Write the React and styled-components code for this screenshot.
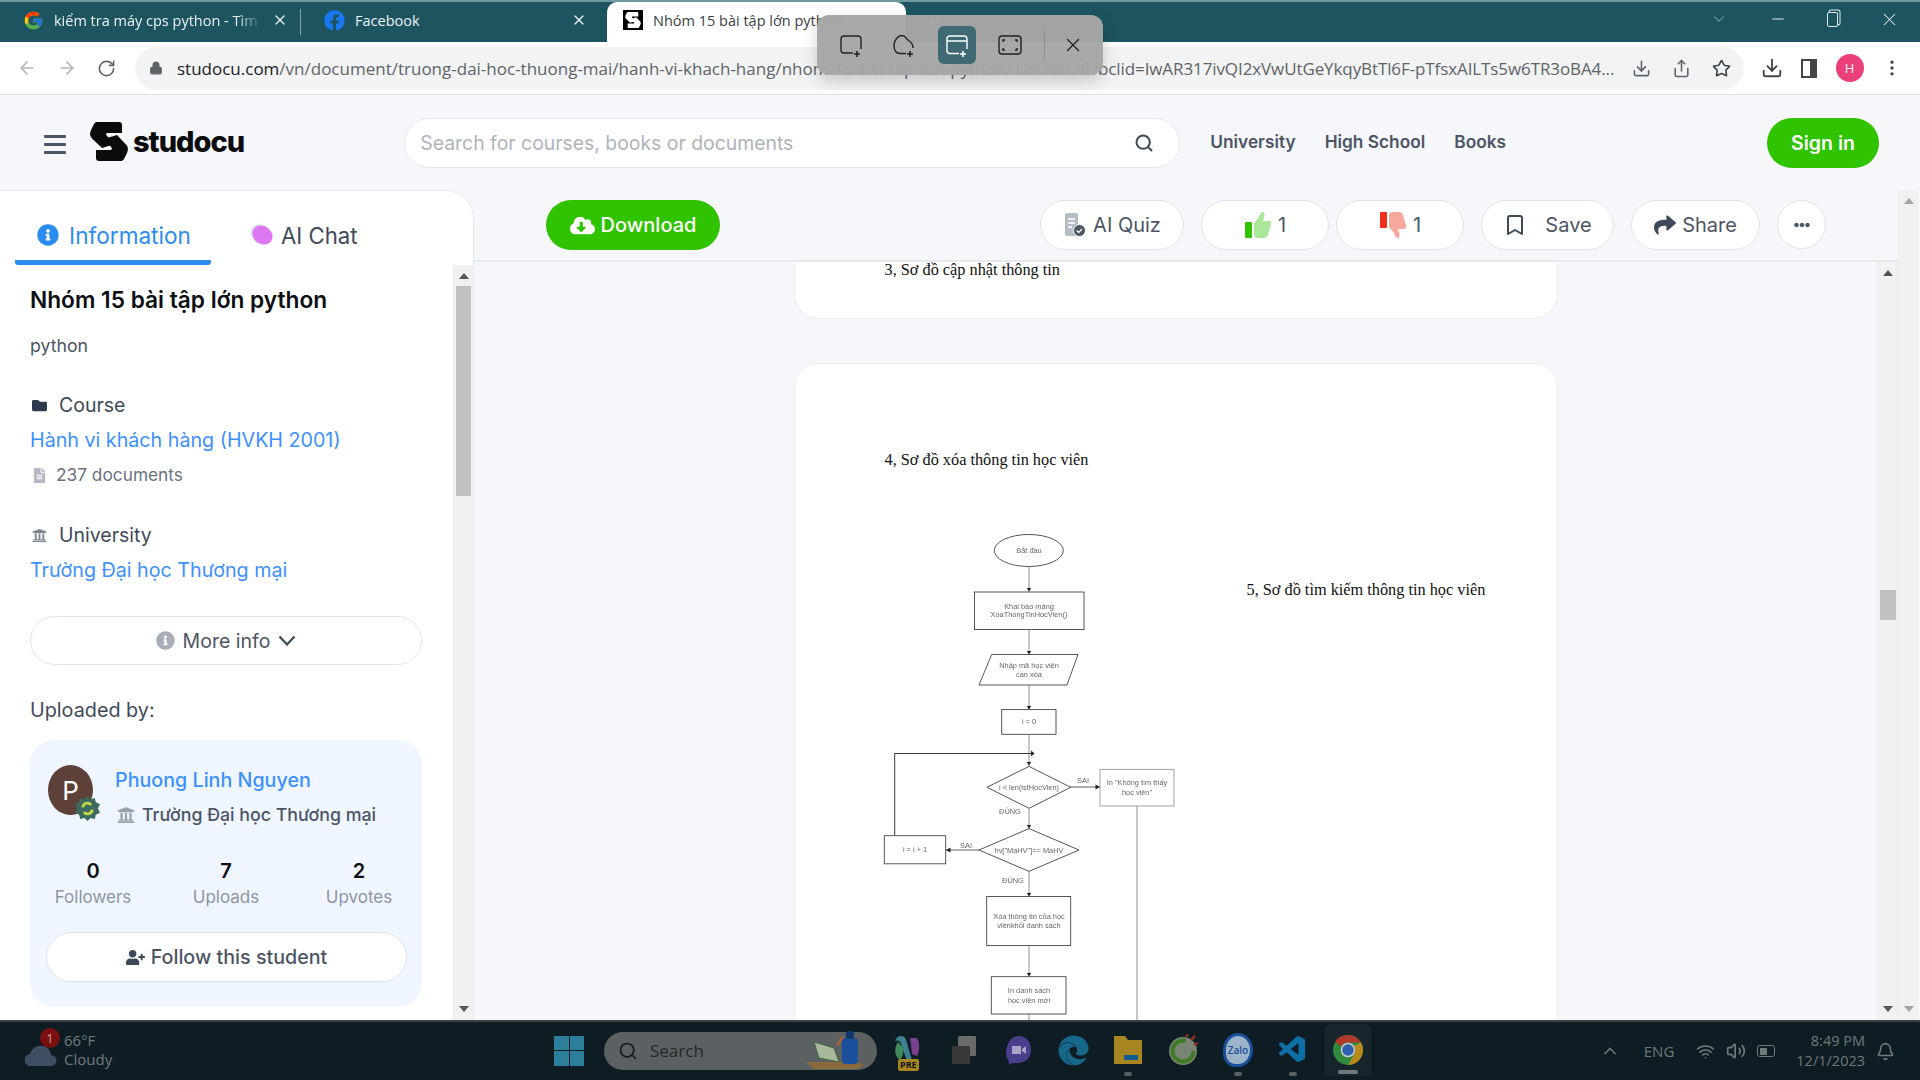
import React from "react";
import styled, { createGlobalStyle } from "styled-components";
import {
  ArrowLeft, ArrowRight, RotateCw, Lock, Star, Download, Share, X, Minus, ChevronDown, ChevronUp,
  Search, Bookmark, Wifi, Volume2, Bell, Plus, EllipsisVertical,
} from "lucide-react";
import {
  FaFolder, FaFileAlt, FaUniversity, FaInfoCircle, FaUserPlus, FaShare, FaEllipsisH, FaCloudDownloadAlt, FaFacebook, FaEdge,
} from "react-icons/fa";
import { FcGoogle } from "react-icons/fc";
import { VscVscode } from "react-icons/vsc";

const UI = '"Inter", "Liberation Sans", sans-serif';
const CHROME = '"Open Sans", "Liberation Sans", sans-serif';

const GlobalStyle = createGlobalStyle`
  html, body { margin: 0; padding: 0; background: #f5f7fb; }
  * { box-sizing: border-box; }
`;

function StudocuLogo() {
  return (
    <svg width="38" height="39" viewBox="0 0 38 39" fill="#0b0b0b">
      <path d="M7 0H29a3 3 0 0 1 3 3V11H18c-2 0-2.500 1.500-1 3L25 22 12 26 2.500 17C-1 13.500 0 11 1 8L4 2C5 .5 6 0 7 0Z" />
      <path d="M31 39H9a3 3 0 0 1-3-3V28H20c2 0 2.500-1.500 1-3L14 17 27 13l8.500 9c3.500 3.500 2.500 6 1.500 9l-3 6c-1 1.500-2 2-3 2Z" />
    </svg>
  );
}

function StudocuFavicon() {
  return (
    <FaviconBox>
      <svg width="16" height="16" viewBox="0 0 38 39" fill="#fff">
        <path d="M7 0H29a3 3 0 0 1 3 3V11H18c-2 0-2.500 1.500-1 3L25 22 12 26 2.500 17C-1 13.500 0 11 1 8L4 2C5 .5 6 0 7 0Z" />
        <path d="M31 39H9a3 3 0 0 1-3-3V28H20c2 0 2.500-1.500 1-3L14 17 27 13l8.500 9c3.500 3.500 2.500 6 1.500 9l-3 6c-1 1.500-2 2-3 2Z" />
      </svg>
    </FaviconBox>
  );
}

function SnipIcon({ kind, color = "#222" }) {
  const plus = <path d="M19 19v6M16 22h6" stroke={color} strokeWidth="1.6" />;
  return (
    <svg width="26" height="26" viewBox="0 0 26 26" fill="none" stroke={color} strokeWidth="1.4">
      {kind === "rect" && (<><path d="M15 21H6a3 3 0 0 1-3-3V7a3 3 0 0 1 3-3h14a3 3 0 0 1 3 3v10" />{plus}</>)}
      {kind === "free" && (<><path d="M15 21.500H9C5 21.500 3 18 3 14 3 8 7 3.500 11 3.500c4 0 3.500 3 6.500 5C20 10 22 12 22 16" />{plus}</>)}
      {kind === "window" && (<><path d="M15 21.500H6a3 3 0 0 1-3-3V7a3 3 0 0 1 3-3h14a3 3 0 0 1 3 3v10M3 9h20" />{plus}</>)}
      {kind === "full" && (<><rect x="2" y="4" width="22" height="18" rx="3" /><path d="M8 8H6v2M18 8h2v2M8 18H6v-2M18 18h2v-2" /></>)}
    </svg>
  );
}

function ThumbIcon({ down }) {
  const bar = down ? "#f0301c" : "#2fc300";
  const hand = down ? "#f5a89c" : "#a9e89b";
  return (
    <ThumbSvg $down={down} width="28" height="28" viewBox="0 0 28 28">
      <rect x="1" y="11" width="7" height="16" rx="1" fill={bar} />
      <path d="M10 12 15 6c1-2 1-4 3-5 2 0 3 2 2.500 4L19 10h6c2 0 2.500 2 2 3.500L24 24c-.5 2-2 3-4 3h-6c-2 0-4-1-4-3Z" fill={hand} />
    </ThumbSvg>
  );
}

function QuizIcon() {
  return (
    <svg width="24" height="24" viewBox="0 0 24 24">
      <path d="M2 2a2 2 0 0 1 2-2h9a2 2 0 0 1 2 2v19a2 2 0 0 1-2 2H4a2 2 0 0 1-2-2Z" fill="#b6bcc6" />
      <path d="M5 6h7M5 10h7M5 14h4" stroke="#fff" strokeWidth="1.500" />
      <circle cx="16.500" cy="17.500" r="6" fill="#4c5564" stroke="#fff" />
      <path d="M13.700 17.500l2 2 3.300-3.500" stroke="#fff" strokeWidth="1.400" fill="none" />
    </svg>
  );
}

function VerifiedBadge() {
  return (
    <BadgeWrap>
      <svg width="25" height="25" viewBox="0 0 24 24">
        <path d="M12 0l3 3 4-1 1 4 4 2-2 4 2 4-4 2-1 4-4-1-3 3-3-3-4 1-1-4-4-2 2-4-2-4 4-2 1-4 4 1Z" fill="#3d6b60" />
        <path d="M7.500 11a4.500 4.500 0 0 1 8-2.500M16.500 13a4.500 4.500 0 0 1-8 2.500" stroke="#c8d94a" strokeWidth="2.600" fill="none" />
      </svg>
    </BadgeWrap>
  );
}

function MoreChevron() {
  return (
    <svg width="18" height="11" viewBox="0 0 18 11" fill="none" stroke="#3e4a5a" strokeWidth="2.200">
      <path d="M1.500 1.500 9 9.500l7.500-8" />
    </svg>
  );
}

function Flowchart() {
  const Box = (x, y, w, h) => <rect x={x} y={y} width={w} height={h} fill="#fff" stroke="#444" strokeWidth="0.9" />;
  const Line = (d) => <path d={d} fill="none" stroke="#777" strokeWidth="0.8" />;
  const Arrow = (x, y) => <path d={`M${x - 2.200} ${y - 3}h4.400l-2.200 3.400Z`} fill="#222" />;
  const T = (x, y, s) => <text x={x} y={y} textAnchor="middle" fontSize="7.400" fill="#666" fontFamily="Liberation Sans, sans-serif">{s}</text>;
  return (
    <ChartSvg width="300" height="500" viewBox="880 530 300 500">
      {Line("M1029 567V1020")}
      {Line("M1137 806V1030")}
      <path d="M894.700 835.700V753.500H1031" fill="none" stroke="#222" strokeWidth="0.9" />
      <path d="M1031 750.500v6l3.500-3Z" fill="#222" />
      <path d="M1070 787H1100" fill="none" stroke="#333" strokeWidth="0.8" />
      <path d="M1100 787l-4.500-2.500v5Z" fill="#222" />
      <path d="M979 850H946" fill="none" stroke="#333" strokeWidth="0.8" />
      <path d="M946 850l4.500-2.500v5Z" fill="#222" />
      {Arrow(1029, 591)}{Arrow(1029, 654)}{Arrow(1029, 709)}{Arrow(1029, 765)}{Arrow(1029, 828)}{Arrow(1029, 896)}{Arrow(1029, 976)}
      <ellipse cx="1028.800" cy="550.500" rx="34.500" ry="16" fill="#fff" stroke="#444" strokeWidth="0.9" />
      {Box(974.500, 592, 109.500, 37.500)}
      <polygon points="991.700,654.500 1078,654.500 1067,685 979,685" fill="#fff" stroke="#444" strokeWidth="0.9" />
      {Box(1001.700, 709.600, 54.300, 24.700)}
      <polygon points="987,787.300 1029,766.400 1070.700,787.300 1029,808.300" fill="#fff" stroke="#444" strokeWidth="0.9" />
      <rect x="1100" y="769.400" width="74" height="36.600" fill="#fff" stroke="#999" strokeWidth="0.9" />
      <polygon points="979,850 1029,828.600 1079,850 1029,871.400" fill="#fff" stroke="#444" strokeWidth="0.9" />
      {Box(884.300, 835.700, 61.400, 28.100)}
      {Box(986.700, 896.500, 84, 49.100)}
      {Box(991.300, 976.700, 74.700, 37.300)}
      {T(1029, 553, "Bắt đầu")}
      {T(1029, 608.500, "Khai báo mảng")}
      {T(1029, 617, "XoaThongTinHocVien()")}
      {T(1029, 667.500, "Nhập mã học viên")}
      {T(1029, 677, "cần xóa")}
      {T(1029, 724, "i = 0")}
      {T(1029, 789.500, "i < len(lstHocVien)")}
      {T(1083, 782.500, "SAI")}
      {T(1137, 785, "In \"Không tìm thấy")}
      {T(1137, 794.500, "học viên\"")}
      {T(1010, 814, "ĐÚNG")}
      {T(1029, 852.500, "hv[\"MaHV\"]== MaHV")}
      {T(966, 847.500, "SAI")}
      {T(915, 852, "i = i + 1")}
      {T(1013, 882.500, "ĐÚNG")}
      {T(1029, 919, "Xóa thông tin của học")}
      {T(1029, 928, "viênkhỏi danh sách")}
      {T(1029, 993, "In danh sách")}
      {T(1029, 1003, "học viên mới")}
    </ChartSvg>
  );
}

function Scrollbar({ width, thumbTop, thumbHeight, inset, muted }) {
  return (
    <Track $width={width}>
      <ArrowTop $muted={muted} />
      {thumbHeight ? <Thumb $top={thumbTop} $height={thumbHeight} $inset={inset} /> : null}
      <ArrowBottom $muted={muted} />
    </Track>
  );
}

function TaskbarIcons() {
  return (
    <>
      <TaskIcon>
        <svg width="32" height="32" viewBox="0 0 32 32">
          <path d="M9 2c4 0 5 3 6 7l4 14c1 4 5 4 7 4-3 3-9 3-11 0L9 10C8 6 6 6 3 7c1-3 3-5 6-5Z" fill="#3f7f90" />
          <path d="M6 8c-4 6-4 14 2 18 3-4 4-8 3-12Z" fill="#3f8a5a" />
          <path d="M18 4h7c3 5 3 12 0 18l-5-2Z" fill="#7a3f90" />
        </svg>
        <PreTag>PRE</PreTag>
      </TaskIcon>
      <TaskIcon>
        <svg width="32" height="32" viewBox="0 0 32 32">
          <rect x="11" y="2" width="18" height="20" fill="#6a6a6a" rx="1" />
          <rect x="5" y="12" width="18" height="18" fill="#383838" rx="1" />
        </svg>
      </TaskIcon>
      <TaskIcon>
        <svg width="32" height="32" viewBox="0 0 32 32">
          <path d="M16 2c8 0 13 6 13 14s-6 13-13 13c-3 0-6-.5-9 2 0-3 0-4-2-7C2 16 7 2 16 2Z" fill="#4a3f8c" />
          <path d="M10 12h9v8h-9ZM20 15l4-3v8l-4-3Z" fill="#a9a4c8" />
        </svg>
      </TaskIcon>
      <TaskIcon><FaEdge size={31} color="#17688a" /></TaskIcon>
      <TaskIcon $dot>
        <svg width="32" height="32" viewBox="0 0 32 32">
          <path d="M2 2h11l3 4h14v24H2Z" fill="#a98522" />
          <rect x="12" y="21" width="14" height="5" fill="#0f5c8c" />
        </svg>
      </TaskIcon>
      <TaskIcon>
        <svg width="32" height="32" viewBox="0 0 32 32">
          <circle cx="16" cy="17" r="14" fill="#7a8474" />
          <circle cx="16" cy="17" r="10.500" fill="none" stroke="#3f7a24" strokeWidth="4" strokeDasharray="52 14" />
          <path d="M19 3l2-3M24 6l4-4M27 11l4-2" stroke="#8a3220" strokeWidth="2.500" />
        </svg>
      </TaskIcon>
      <TaskIcon $dot>
        <ZaloMark>Zalo</ZaloMark>
      </TaskIcon>
      <TaskIcon $dot><VscVscode size={32} color="#0e6fa8" /></TaskIcon>
      <ChromeSlot>
        <svg width="32" height="32" viewBox="0 0 32 32">
          <circle cx="16" cy="16" r="15" fill="#2f8a3f" />
          <path d="M16 1a15 15 0 0 1 13 7.500H16a7.500 7.500 0 0 0-6.500 3.700L3 8A15 15 0 0 1 16 1Z" fill="#b0392c" />
          <path d="M29 8.500A15 15 0 0 1 16 31l6.500-11.200A7.500 7.500 0 0 0 22 12Z" fill="#b88a1c" />
          <circle cx="16" cy="16" r="6.500" fill="#2f5fb0" stroke="#c9ccd0" strokeWidth="1.500" />
        </svg>
        <ChromeBar />
      </ChromeSlot>
    </>
  );
}

export default function App() {
  return (
    <>
      <GlobalStyle />
      <Screen>
        <TabStrip>
          <Tab $width={300}>
            <FcGoogle size={21} />
            <TabTitle $fade>kiểm tra máy cps python - Tìm trên Google</TabTitle>
            <X size={16} color="#e6eeef" />
          </Tab>
          <TabDivider />
          <Tab $width={298}>
            <FaFacebook size={21} color="#1877f2" />
            <TabTitle>Facebook</TabTitle>
            <X size={16} color="#e6eeef" />
          </Tab>
          <ActiveTab>
            <StudocuFavicon />
            <TabTitle $active>Nhóm 15 bài tập lớn python</TabTitle>
          </ActiveTab>
          <NewTab><Plus size={18} color="#e6eeef" /></NewTab>
          <WindowControls>
            <ChevronDown size={18} color="#9fbcc0" strokeWidth={1.2} />
            <Minus size={18} color="#dfe9ea" strokeWidth={1.4} />
            <RestoreGlyph />
            <X size={21} color="#e6eeef" strokeWidth={1.2} />
          </WindowControls>
        </TabStrip>

        <AddressBar>
          <NavIcons>
            <ArrowLeft size={20} color="#b3b6ba" />
            <ArrowRight size={20} color="#b3b6ba" />
            <RotateCw size={19} color="#5f6368" />
          </NavIcons>
          <UrlPill>
            <Lock size={14} color="#5f6368" fill="#5f6368" />
            <UrlHead>
              <b>studocu.com</b>/vn/document/truong-dai-hoc-thuong-mai/hanh-vi-khach-hang/nhom-15-bai-tap-lon-python/122700767?f
            </UrlHead>
            <UrlTail>bclid=IwAR317ivQI2xVwUtGeYkqyBtTl6F-pTfsxAILTs5w6TR3oBA4...</UrlTail>
            <PillIcons>
              <Download size={19} color="#5f6368" />
              <Share size={19} color="#5f6368" />
              <Star size={19} color="#3c4043" />
            </PillIcons>
          </UrlPill>
          <BrowserIcons>
            <Download size={22} color="#444" />
            <SidePanelGlyph />
            <ProfileDot>H</ProfileDot>
            <EllipsisVertical size={20} color="#444" />
          </BrowserIcons>
        </AddressBar>

        <SiteHeader>
          <Burger><span /><span /><span /></Burger>
          <Logo>
            <StudocuLogo />
            <LogoWord>studocu</LogoWord>
          </Logo>
          <SearchBox>
            <SearchText>Search for courses, books or documents</SearchText>
            <Search size={20} color="#3e4a5a" strokeWidth={2.4} />
          </SearchBox>
          <NavLinks>
            <NavLink>University</NavLink>
            <NavLink>High School</NavLink>
            <NavLink>Books</NavLink>
          </NavLinks>
          <SignIn>Sign in</SignIn>
        </SiteHeader>

        <Body>
          <Sidebar>
            <SideTabs>
              <InfoTab>
                <FaInfoCircle size={22} color="#2a8cf0" />
                Information
              </InfoTab>
              <ChatTab>
                <ChatBlob />
                AI Chat
              </ChatTab>
            </SideTabs>
            <SideBody>
              <SideContent>
                <DocTitle>Nhóm 15 bài tập lớn python</DocTitle>
                <DocSub>python</DocSub>
                <MetaHead $gap={34}><FaFolder size={15} color="#2e3b4e" />Course</MetaHead>
                <MetaLink>Hành vi khách hàng (HVKH 2001)</MetaLink>
                <DocCount><FaFileAlt size={15} color="#b4bac3" />237 documents</DocCount>
                <MetaHead $gap={35}><FaUniversity size={15} color="#7d8592" />University</MetaHead>
                <MetaLink>Trường Đại học Thương mại</MetaLink>
                <MoreInfo>
                  <FaInfoCircle size={19} color="#a9afb8" />
                  More info
                  <MoreChevron />
                </MoreInfo>
                <UploadedBy>Uploaded by:</UploadedBy>
                <UploaderCard>
                  <UploaderRow>
                    <Avatar>P<VerifiedBadge /></Avatar>
                    <div>
                      <UploaderName>Phuong Linh Nguyen</UploaderName>
                      <UploaderSchool><FaUniversity size={18} color="#9aa1ac" />Trường Đại học Thương mại</UploaderSchool>
                    </div>
                  </UploaderRow>
                  <Stats>
                    <Stat><StatNum>0</StatNum><StatLabel>Followers</StatLabel></Stat>
                    <Stat><StatNum>7</StatNum><StatLabel>Uploads</StatLabel></Stat>
                    <Stat><StatNum>2</StatNum><StatLabel>Upvotes</StatLabel></Stat>
                  </Stats>
                  <FollowButton><FaUserPlus size={19} color="#3e4a5a" />Follow this student</FollowButton>
                </UploaderCard>
              </SideContent>
              <Scrollbar width={20} thumbTop={3} thumbHeight={210} inset={2} />
            </SideBody>
          </Sidebar>

          <Main>
            <MainColumn>
              <ActionBar>
                <DownloadButton><FaCloudDownloadAlt size={25} />Download</DownloadButton>
                <Actions>
                  <PillButton $width={144}><QuizIcon />AI Quiz</PillButton>
                  <PillButton $width={128}><ThumbIcon />1</PillButton>
                  <PillButton $width={128} $tight><ThumbIcon down />1</PillButton>
                  <PillButton $width={133} $wide><Bookmark size={24} color="#3e4a5a" />Save</PillButton>
                  <PillButton $width={129}><FaShare size={22} color="#3e4a5a" />Share</PillButton>
                  <RoundButton><FaEllipsisH size={16} color="#4c5564" /></RoundButton>
                </Actions>
              </ActionBar>
              <DocRow>
                <DocArea>
                  <PageTop>
                    <PageLine>3, Sơ đồ cập nhật thông tin</PageLine>
                  </PageTop>
                  <PageFull>
                    <LeftCol>
                      <PageLine>4, Sơ đồ xóa thông tin học viên</PageLine>
                      <Flowchart />
                    </LeftCol>
                    <RightCol>
                      <PageLine>5, Sơ đồ tìm kiếm thông tin học viên</PageLine>
                    </RightCol>
                  </PageFull>
                </DocArea>
                <Scrollbar width={21} thumbTop={310} thumbHeight={30} inset={2} />
              </DocRow>
            </MainColumn>
            <Scrollbar width={20} muted />
          </Main>
        </Body>

        <Taskbar>
          <Weather>
            <CloudWrap>
              <svg width="32" height="22" viewBox="0 0 32 22"><path d="M6 22a6 6 0 0 1-1-12C7 4 12 1 18 2c5 1 8 5 8 9a5.500 5.500 0 0 1 0 11Z" fill="#3f4f63" /></svg>
              <AlertBadge>1</AlertBadge>
            </CloudWrap>
            <WeatherText><span>66°F</span><span>Cloudy</span></WeatherText>
          </Weather>
          <StartGlyph>
            <i /><i /><i /><i />
          </StartGlyph>
          <TaskSearch>
            <Search size={20} color="#151a1c" strokeWidth={2} />
            <span>Search</span>
            <SearchArt>
              <svg width="62" height="40" viewBox="0 0 62 40">
                <path d="M0 32h50l8 3-6 4H8Z" fill="#8a6a3c" />
                <path d="M8 12l20 6 5 14-20-4Z" fill="#a9b79a" stroke="#3d6b40" />
                <path d="M30 14l6-8 2 2-6 8Z" fill="#a8623c" />
                <rect x="36" y="8" width="16" height="26" rx="4" fill="#1a4f9c" />
                <rect x="40" y="1" width="8" height="8" rx="2" fill="#12386e" />
              </svg>
            </SearchArt>
          </TaskSearch>
          <TaskIcons><TaskbarIcons /></TaskIcons>
          <Tray>
            <ChevronUp size={20} color="#70797c" />
            <TrayLang>ENG</TrayLang>
            <Wifi size={19} color="#70797c" />
            <Volume2 size={20} color="#70797c" />
            <BatteryGlyph><i /></BatteryGlyph>
            <Clock><span>8:49 PM</span><span>12/1/2023</span></Clock>
            <Bell size={19} color="#70797c" />
          </Tray>
        </Taskbar>

        <SnipToolbar>
          <SnipButton><SnipIcon kind="rect" /></SnipButton>
          <SnipButton><SnipIcon kind="free" /></SnipButton>
          <SnipButton $active><SnipIcon kind="window" color="#fff" /></SnipButton>
          <SnipButton><SnipIcon kind="full" /></SnipButton>
          <SnipDivider />
          <SnipClose><X size={22} color="#222" strokeWidth={1.4} /></SnipClose>
        </SnipToolbar>
      </Screen>
    </>
  );
}

const Screen = styled.div`
  position: relative;
  width: 1920px;
  height: 1080px;
  display: flex;
  flex-direction: column;
  overflow: hidden;
  background: #f5f7fb;
`;

/* browser chrome */
const TabStrip = styled.div`
  height: 42px;
  flex: none;
  display: flex;
  align-items: flex-end;
  background: #1c5560;
  border-top: 2px solid #6f9aa0;
  font-family: ${CHROME};
`;

const Tab = styled.div`
  width: ${(p) => p.$width}px;
  height: 40px;
  flex: none;
  display: flex;
  align-items: center;
  gap: 10px;
  padding: 0 12px 4px 23px;
`;

const TabDivider = styled.div`
  width: 1px;
  height: 26px;
  margin-bottom: 7px;
  flex: none;
  background: #7fa3a8;
`;

const TabTitle = styled.div`
  flex: 1;
  min-width: 0;
  font-size: 14.500px;
  white-space: nowrap;
  overflow: hidden;
  color: ${(p) => (p.$active ? "#3c4043" : "#eaf1f2")};
  ${(p) => p.$fade && "mask-image: linear-gradient(90deg, #000 88%, transparent 100%);"}
`;

const ActiveTab = styled(Tab)`
  width: 299px;
  margin-left: 8px;
  padding-left: 16px;
  background: #fff;
  border-radius: 10px 10px 0 0;
`;

const FaviconBox = styled.div`
  width: 20px;
  height: 20px;
  flex: none;
  display: flex;
  align-items: center;
  justify-content: center;
  background: #000;
`;

const NewTab = styled.div`
  margin-left: 18px;
  height: 40px;
  display: flex;
  align-items: center;
`;

const WindowControls = styled.div`
  margin-left: auto;
  height: 40px;
  width: 210px;
  padding: 0 20px 6px 0;
  align-self: flex-start;
  display: flex;
  align-items: center;
  justify-content: space-between;
`;

const RestoreGlyph = styled.div`
  width: 11px;
  height: 15px;
  border: 1.500px solid #dfe9ea;
  border-radius: 2px;
  box-shadow: 2px -2px 0 -0.500px #1c5560, 2px -2px 0 0.500px #dfe9ea;
`;

const AddressBar = styled.div`
  height: 53px;
  flex: none;
  display: flex;
  align-items: center;
  background: #fff;
  border-bottom: 1px solid #dfe1e5;
  font-family: ${CHROME};
`;

const NavIcons = styled.div`
  width: 135px;
  flex: none;
  display: flex;
  align-items: center;
  gap: 20px;
  padding-left: 17px;
`;

const UrlPill = styled.div`
  width: 1609px;
  height: 43px;
  flex: none;
  display: flex;
  align-items: center;
  padding-left: 14px;
  background: #f1f3f4;
  border-radius: 22px;
`;

const UrlHead = styled.div`
  width: 921px;
  margin-left: 14px;
  flex: none;
  white-space: nowrap;
  overflow: hidden;
  font-size: 17px;
  color: #5f6368;
  b { font-weight: 400; color: #202124; }
`;

const UrlTail = styled.div`
  width: 522px;
  flex: none;
  white-space: nowrap;
  font-size: 17px;
  letter-spacing: -0.1px;
  color: #5f6368;
`;

const PillIcons = styled.div`
  flex: 1;
  display: flex;
  justify-content: space-between;
  padding: 0 13px 0 12px;
`;

const BrowserIcons = styled.div`
  flex: 1;
  display: flex;
  align-items: center;
  justify-content: space-between;
  padding: 0 18px 0 17px;
`;

const SidePanelGlyph = styled.div`
  width: 16px;
  height: 19px;
  border: 2.500px solid #444;
  border-right-width: 7px;
`;

const ProfileDot = styled.div`
  width: 28px;
  height: 28px;
  border-radius: 50%;
  display: flex;
  align-items: center;
  justify-content: center;
  background: #ec407a;
  color: #fff;
  font-size: 13px;
`;

/* site header */
const SiteHeader = styled.div`
  height: 95px;
  flex: none;
  display: flex;
  align-items: center;
  padding: 0 41px 0 44px;
  font-family: ${UI};
`;

const Burger = styled.div`
  width: 22px;
  display: flex;
  flex-direction: column;
  gap: 5px;
  margin-top: 3px;
  span { height: 3px; background: #4c5564; border-radius: 1px; }
`;

const Logo = styled.div`
  display: flex;
  align-items: center;
  gap: 5px;
  margin-left: 24px;
  margin-top: -3px;
`;

const LogoWord = styled.div`
  font-size: 29px;
  font-weight: 800;
  letter-spacing: -1px;
  color: #0b0b0b;
`;

const SearchBox = styled.div`
  width: 776px;
  height: 50px;
  margin-left: 160px;
  display: flex;
  align-items: center;
  justify-content: space-between;
  padding: 0 25px 0 15px;
  background: #fff;
  border: 1.500px solid #e4e7ee;
  border-radius: 25px;
`;

const SearchText = styled.span`
  font-size: 19.400px;
  color: #aeb3bc;
`;

const NavLinks = styled.div`
  display: flex;
  gap: 29px;
  margin-left: 30px;
  margin-top: -2px;
`;

const NavLink = styled.span`
  font-size: 17.300px;
  font-weight: 600;
  color: #4c5564;
`;

const SignIn = styled.div`
  width: 112px;
  height: 50px;
  margin-left: auto;
  display: flex;
  align-items: center;
  justify-content: center;
  background: #2fc300;
  border-radius: 25px;
  color: #fff;
  font-size: 19.500px;
  font-weight: 600;
`;

/* body */
const Body = styled.div`
  flex: 1;
  min-height: 0;
  display: flex;
  font-family: ${UI};
`;

const Sidebar = styled.aside`
  width: 474px;
  flex: none;
  display: flex;
  flex-direction: column;
  background: #fff;
  border: 1.500px solid #e6e9ef;
  border-width: 1.500px 1.500px 0 0;
  border-top-right-radius: 28px;
`;

const SideTabs = styled.div`
  height: 74px;
  flex: none;
  display: flex;
  align-items: flex-end;
  padding-left: 15px;
`;

const InfoTab = styled.div`
  width: 196px;
  height: 60px;
  display: flex;
  align-items: center;
  justify-content: center;
  gap: 10px;
  padding: 5px 0 0 2px;
  border-bottom: 5px solid #2a8cf0;
  border-radius: 0 0 3px 3px;
  font-size: 22.600px;
  font-weight: 400;
  color: #2a8cf0;
`;

const ChatTab = styled.div`
  height: 60px;
  margin-left: 41px;
  display: flex;
  align-items: center;
  gap: 8px;
  font-size: 22.200px;
  color: #3e4a5a;
`;

const ChatBlob = styled.div`
  width: 21px;
  height: 18px;
  background: #dd78f2;
  border-radius: 50% 60% 50% 60%;
  box-shadow: -2px 0 2px #d8dbe4;
  transform: rotate(25deg);
`;

const SideBody = styled.div`
  flex: 1;
  min-height: 0;
  display: flex;
`;

const SideContent = styled.div`
  flex: 1;
  min-width: 0;
  overflow: hidden;
  padding: 20px 31px 0 30px;
`;

const DocTitle = styled.h1`
  margin: 0;
  font-size: 22.700px;
  line-height: 30px;
  font-weight: 600;
  color: #0c0f14;
  white-space: nowrap;
`;

const DocSub = styled.div`
  margin-top: 19px;
  font-size: 17.700px;
  line-height: 24px;
  color: #4c5564;
`;

const MetaHead = styled.div`
  margin-top: ${(p) => p.$gap}px;
  display: flex;
  align-items: center;
  gap: 12px;
  font-size: 19.500px;
  line-height: 26px;
  color: #3e4a5a;
  svg { margin-left: 2px; }
`;

const MetaLink = styled.div`
  margin-top: 8px;
  font-size: 19.700px;
  line-height: 28px;
  color: #3d90ff;
  white-space: nowrap;
`;

const DocCount = styled.div`
  margin-top: 9px;
  display: flex;
  align-items: center;
  gap: 9px;
  font-size: 17.300px;
  line-height: 24px;
  color: #6b7280;
  svg { margin-left: 2px; }
`;

const outlined = `
  display: flex;
  align-items: center;
  justify-content: center;
  background: #fff;
  border: 1.500px solid #dfe3ea;
  color: #4c5564;
`;

const MoreInfo = styled.div`
  ${outlined}
  height: 49px;
  margin-top: 32px;
  gap: 8px;
  border-radius: 25px;
  font-size: 19.500px;
`;

const UploadedBy = styled.div`
  margin-top: 32px;
  font-size: 19.800px;
  line-height: 26px;
  color: #3e4a5a;
`;

const UploaderCard = styled.div`
  height: 267px;
  margin-top: 17px;
  padding-top: 25px;
  background: #f0f6ff;
  border-radius: 24px;
`;

const UploaderRow = styled.div`
  display: flex;
  gap: 22px;
  padding-left: 18px;
`;

const Avatar = styled.div`
  position: relative;
  width: 45px;
  height: 50px;
  flex: none;
  display: flex;
  align-items: center;
  justify-content: center;
  background: #5d4037;
  border-radius: 50%;
  color: #fff;
  font-size: 26px;
`;

const BadgeWrap = styled.div`
  position: absolute;
  right: -7px;
  bottom: -6px;
  width: 25px;
  height: 25px;
  display: flex;
`;

const UploaderName = styled.div`
  font-size: 19.700px;
  line-height: 28px;
  font-weight: 500;
  color: #3d90ff;
  margin-top: 1px;
  white-space: nowrap;
`;

const UploaderSchool = styled.div`
  margin-top: 9px;
  display: flex;
  align-items: center;
  gap: 7px;
  font-size: 17.800px;
  line-height: 24px;
  font-weight: 500;
  color: #4c5564;
  white-space: nowrap;
  svg { margin-left: 2px; }
`;

const Stats = styled.div`
  display: grid;
  grid-template-columns: repeat(3, 133px);
  justify-content: center;
  margin-top: 31px;
  text-align: center;
`;

const Stat = styled.div``;

const StatNum = styled.div`
  font-size: 20px;
  line-height: 26px;
  font-weight: 600;
  color: #0c0f14;
`;

const StatLabel = styled.div`
  font-size: 17px;
  line-height: 26px;
  color: #8e95a1;
`;

const FollowButton = styled.div`
  ${outlined}
  height: 50px;
  margin: 22px 15px 0 16px;
  gap: 6px;
  border-radius: 25px;
  font-size: 19.700px;
  font-weight: 500;
`;

const Track = styled.div`
  width: ${(p) => p.$width}px;
  flex: none;
  position: relative;
  display: flex;
  flex-direction: column;
  background: #f1f1f1;
  border-left: 1px solid #ececec;
`;

const ArrowTop = styled.div`
  width: 0;
  height: 0;
  flex: none;
  margin: 8px auto 0;
  border-left: 5px solid transparent;
  border-right: 5px solid transparent;
  border-bottom: 6px solid ${(p) => (p.$muted ? "#a3a3a3" : "#555")};
`;

const ArrowBottom = styled.div`
  width: 0;
  height: 0;
  flex: none;
  margin: auto auto 8px;
  border-left: 5px solid transparent;
  border-right: 5px solid transparent;
  border-top: 6px solid ${(p) => (p.$muted ? "#a3a3a3" : "#555")};
`;

const Thumb = styled.div`
  height: ${(p) => p.$height}px;
  flex: none;
  margin: ${(p) => p.$top + 4}px ${(p) => p.$inset}px 0;
  background: #c1c1c1;
`;

const Main = styled.main`
  flex: 1;
  min-width: 0;
  display: flex;
  padding-right: 2px;
`;

const MainColumn = styled.div`
  flex: 1;
  min-width: 0;
  display: flex;
  flex-direction: column;
`;

const ActionBar = styled.div`
  height: 72px;
  flex: none;
  display: flex;
  align-items: flex-start;
  padding: 10px 72px 0 72px;
  border-bottom: 2px solid #e6e9ef;
`;

const DownloadButton = styled.div`
  width: 174px;
  height: 50px;
  display: flex;
  align-items: center;
  justify-content: center;
  gap: 6px;
  background: #2fc300;
  border-radius: 25px;
  color: #fff;
  font-size: 20px;
  font-weight: 500;
`;

const Actions = styled.div`
  margin-left: auto;
  display: flex;
  gap: 17px;
`;

const PillButton = styled.div`
  ${outlined}
  width: ${(p) => p.$width}px;
  height: 50px;
  gap: ${(p) => (p.$wide ? 18 : 6)}px;
  margin-left: ${(p) => (p.$tight ? -10 : 0)}px;
  border-radius: 25px;
  font-size: 20px;
`;

const ThumbSvg = styled.svg`
  transform: ${(p) => (p.$down ? "scaleY(-1)" : "none")};
`;

const RoundButton = styled.div`
  ${outlined}
  width: 49px;
  height: 49px;
  border-radius: 50%;
`;

const DocRow = styled.div`
  flex: 1;
  min-height: 0;
  display: flex;
`;

const DocArea = styled.div`
  flex: 1;
  min-width: 0;
  overflow: hidden;
`;

const PageTop = styled.div`
  width: 764px;
  height: 57px;
  margin: 0 auto;
  padding: 1px 0 0 90px;
  background: #fff;
  border: 1px solid #eceef3;
  border-top: 0;
  border-radius: 0 0 24px 24px;
`;

const PageFull = styled.div`
  width: 764px;
  height: 900px;
  margin: 44px auto 0;
  padding: 89px 0 0 90px;
  display: flex;
  background: #fff;
  border: 1px solid #eceef3;
  border-radius: 24px 24px 0 0;
`;

const PageLine = styled.div`
  font-family: "Liberation Serif", serif;
  font-size: 16.300px;
  line-height: 14px;
  color: #111;
  white-space: nowrap;
`;

const LeftCol = styled.div`
  width: 362px;
  flex: none;
`;

const RightCol = styled.div`
  padding-top: 130px;
`;

const ChartSvg = styled.svg`
  display: block;
  margin: 63px 0 0 -5px;
  filter: blur(0.4px);
`;

/* taskbar */
const Taskbar = styled.div`
  height: 60px;
  flex: none;
  display: flex;
  align-items: center;
  background: #0e1d23;
  border-top: 2px solid #3b4347;
  font-family: ${CHROME};
`;

const Weather = styled.div`
  width: 554px;
  flex: none;
  display: flex;
  align-items: center;
  gap: 8px;
  padding-left: 25px;
`;

const CloudWrap = styled.div`
  position: relative;
  width: 31px;
  height: 22px;
  margin-top: 8px;
`;

const AlertBadge = styled.div`
  position: absolute;
  top: -16px;
  right: -4px;
  width: 20px;
  height: 20px;
  display: flex;
  align-items: center;
  justify-content: center;
  border-radius: 50%;
  background: #7a1010;
  color: #c9a8a8;
  font-size: 12px;
`;

const WeatherText = styled.div`
  display: flex;
  flex-direction: column;
  font-size: 15px;
  line-height: 19px;
  margin-top: -2px;
  color: #6f7b7f;
`;

const StartGlyph = styled.div`
  width: 30px;
  height: 30px;
  flex: none;
  display: grid;
  grid-template-columns: 1fr 1fr;
  gap: 1px;
  margin-top: -1px;
  i { background: #2b7f9c; }
`;

const TaskSearch = styled.div`
  position: relative;
  width: 273px;
  height: 38px;
  margin-left: 20px;
  margin-top: -1px;
  flex: none;
  display: flex;
  align-items: center;
  gap: 12px;
  padding-left: 14px;
  background: #5b6163;
  border-radius: 19px;
  font-size: 17px;
  color: #23282a;
`;

const SearchArt = styled.div`
  position: absolute;
  right: 9px;
  top: -2px;
`;

const TaskIcons = styled.div`
  display: flex;
  align-items: center;
  gap: 23px;
  margin-left: 15px;
  margin-top: -2px;
`;

const TaskIcon = styled.div`
  position: relative;
  width: 32px;
  height: 32px;
  display: flex;
  align-items: center;
  justify-content: center;
  ${(p) => p.$dot && `
    &::after {
      content: "";
      position: absolute;
      left: 12px;
      bottom: -10px;
      width: 8px;
      height: 4px;
      border-radius: 2px;
      background: #5b6163;
    }
  `}
`;

const PreTag = styled.span`
  position: absolute;
  left: 6px;
  bottom: -5px;
  padding: 0 2px;
  background: #a98522;
  border-radius: 2px;
  color: #111;
  font-size: 9px;
  font-weight: 700;
  line-height: 12px;
`;

const ZaloMark = styled.div`
  width: 30px;
  height: 34px;
  display: flex;
  align-items: center;
  justify-content: center;
  border-radius: 50% 50% 50% 40%;
  background: #9db3c9;
  border: 3px solid #1a4f9c;
  color: #1a4f9c;
  font-size: 10px;
  font-weight: 600;
`;

const ChromeSlot = styled.div`
  position: relative;
  width: 46px;
  height: 52px;
  margin-left: -7px;
  display: flex;
  align-items: center;
  justify-content: center;
  background: #16262c;
  border-radius: 5px;
`;

const ChromeBar = styled.div`
  position: absolute;
  left: 13px;
  bottom: 2px;
  width: 20px;
  height: 4px;
  border-radius: 2px;
  background: #6f797c;
`;

const Tray = styled.div`
  margin-left: auto;
  display: flex;
  align-items: center;
  padding-right: 25px;
  color: #70797c;
  gap: 11px;
`;

const TrayLang = styled.span`
  font-size: 15px;
  margin: 0 11px 0 13px;
`;

const BatteryGlyph = styled.div`
  position: relative;
  width: 18px;
  height: 12px;
  border: 1.500px solid #70797c;
  border-radius: 3px;
  padding: 1.500px;
  i { display: block; width: 7px; height: 100%; background: #70797c; }
`;

const Clock = styled.div`
  display: flex;
  flex-direction: column;
  align-items: flex-end;
  margin-left: 10px;
  font-size: 14.500px;
  line-height: 20px;
`;

/* snipping overlay */
const SnipToolbar = styled.div`
  position: absolute;
  left: 817px;
  top: 15px;
  width: 286px;
  height: 60px;
  display: flex;
  align-items: center;
  padding-left: 15px;
  gap: 15px;
  background: rgba(166, 166, 166, 0.97);
  border-radius: 12px;
  box-shadow: 0 6px 16px rgba(0, 0, 0, 0.18);
`;

const SnipButton = styled.div`
  width: 38px;
  height: 38px;
  flex: none;
  display: flex;
  align-items: center;
  justify-content: center;
  border-radius: 6px;
  background: ${(p) => (p.$active ? "#3f6a73" : "transparent")};
`;

const SnipClose = styled(SnipButton)`
  margin-left: -6px;
`;

const SnipDivider = styled.div`
  width: 1px;
  height: 30px;
  flex: none;
  background: #8e8e8e;
`;
